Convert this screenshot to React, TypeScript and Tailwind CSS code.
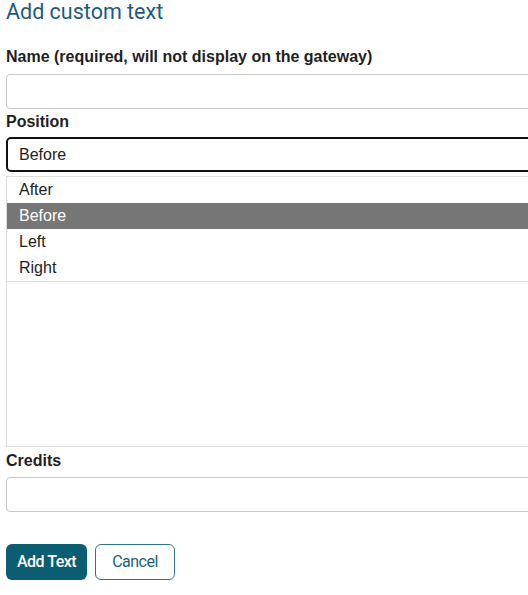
import { useState } from "react";

const options = ["After", "Before", "Left", "Right"];

function Label({ children }: { children: React.ReactNode }) {
  return (
    <label className="block h-[18px] text-[16px] font-bold leading-[18px] text-[#1f1f1f]">
      {children}
    </label>
  );
}

function TextInput() {
  return (
    <input
      type="text"
      className="block h-[35px] w-full rounded-[4px] border border-[#c9c9c9] bg-white px-3 text-[16px] outline-none"
    />
  );
}

export default function App() {
  const [position, setPosition] = useState("Before");

  return (
    <div
      className="h-[595px] w-[528px] overflow-hidden bg-white"
      style={{ fontFamily: '"Liberation Sans", Arial, sans-serif' }}
    >
      <form className="w-[600px] pl-[6px]" onSubmit={(e) => e.preventDefault()}>
        <h1
          className="h-[24px] text-[21.5px] font-normal leading-[24px] text-[#1d5b7b]"
          style={{ fontFamily: "Roboto, sans-serif" }}
        >
          Add custom text
        </h1>

        <div className="mt-[24px]">
          <Label>Name (required, will not display on the gateway)</Label>
          <div className="mt-[8px]">
            <TextInput />
          </div>
        </div>

        <div className="mt-[4px]">
          <Label>Position</Label>
          <div className="mt-[6px] flex h-[35px] items-center rounded-[5px] border-2 border-[#111] px-[11px] text-[16px] text-[#222]">
            {position}
          </div>
          {/* opened listbox */}
          <div className="mt-[4px] h-[271px] border-y border-l border-[#dedede] bg-white">
            <ul className="border-b border-[#dcdcdc]">
              {options.map((o) => (
                <li
                  key={o}
                  onClick={() => setPosition(o)}
                  className={
                    o === position
                      ? "h-[26px] bg-[#767676] pl-3 text-[16px] leading-[26px] text-white"
                      : "h-[26px] pl-3 text-[16px] leading-[26px] text-[#222]"
                  }
                >
                  {o}
                </li>
              ))}
            </ul>
          </div>
        </div>

        <div className="mt-[5px]">
          <Label>Credits</Label>
          <div className="mt-[7px]">
            <TextInput />
          </div>
        </div>

        <div className="mt-[32px] flex gap-2" style={{ fontFamily: "Roboto, sans-serif" }}>
          <button
            type="submit"
            className="h-[36px] w-[81px] rounded-[6px] bg-[#0b5d72] text-[16px] font-medium tracking-[-0.5px] text-white"
          >
            Add Text
          </button>
          <button
            type="button"
            className="h-[36px] w-[80px] rounded-[6px] border border-[#2f7488] bg-white text-[16px] font-normal tracking-[-0.5px] text-[#1d6378]"
          >
            Cancel
          </button>
        </div>
      </form>
    </div>
  );
}
